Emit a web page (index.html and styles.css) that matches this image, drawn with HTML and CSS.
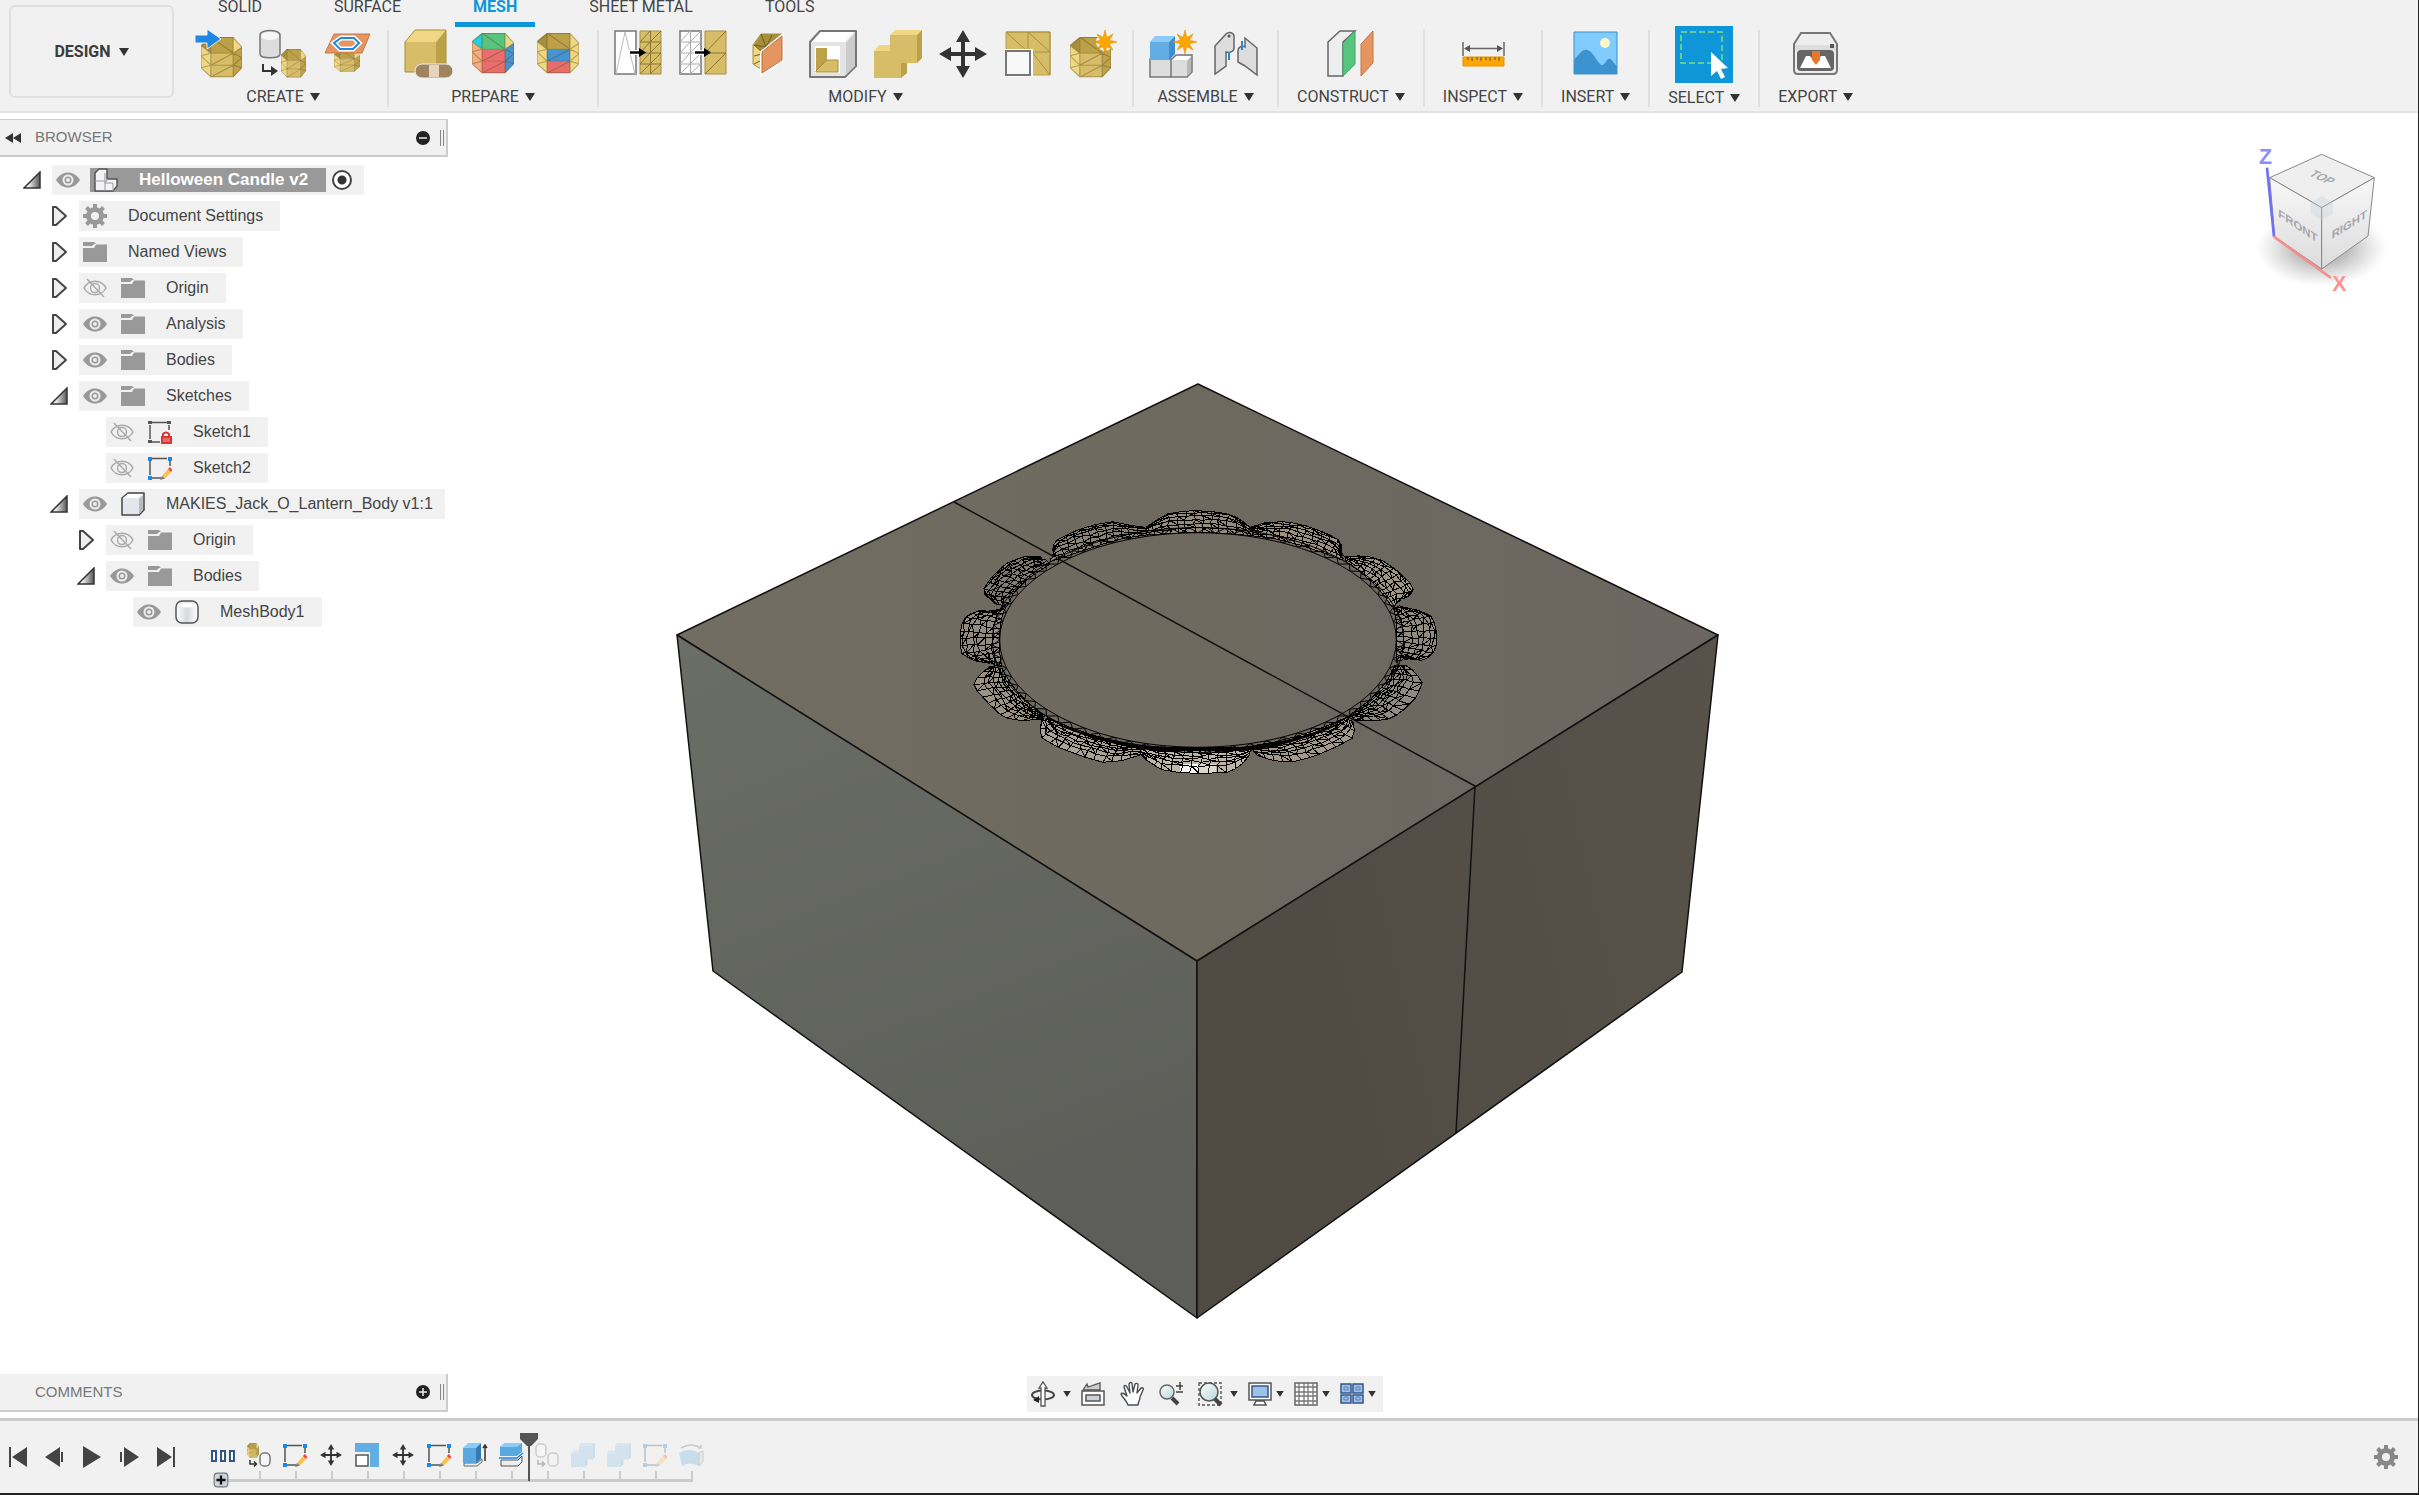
FILE: index.html
```html
<!DOCTYPE html>
<html lang="en">
<head>
<meta charset="utf-8">
<title>Helloween Candle v2</title>
<link rel="stylesheet" href="styles.css">
<script src="mesh.js" defer></script>
</head>
<body>
<svg class="defs" aria-hidden="true">
  <defs>
    <linearGradient id="gOpen" x1="0" y1="0" x2="1" y2="0"><stop offset="0.3" stop-color="#eee"/><stop offset="1" stop-color="#555"/></linearGradient>
    <linearGradient id="gSilver" x1="0" y1="0" x2="1" y2="0"><stop offset="0" stop-color="#fff"/><stop offset="0.5" stop-color="#d5dae0"/><stop offset="1" stop-color="#fff"/></linearGradient>
    <linearGradient id="gLens" x1="0" y1="0" x2="1" y2="1"><stop offset="0" stop-color="#fff"/><stop offset="1" stop-color="#b4d4d8"/></linearGradient>
    <symbol id="barrel" viewBox="0 0 42 48" preserveAspectRatio="none">
      <path fill="var(--tl,#a88f3c)" d="M10 0L0 10L10 19Z"/><path fill="var(--top,#bda149)" d="M10 0H33V19H10Z"/>
      <path fill="var(--tr,#f0d783)" d="M33 0L42 12L33 19Z"/><path fill="var(--left,#f0d783)" d="M0 10L10 19V47L0 36Z"/>
      <path fill="var(--mid,#d8bd69)" d="M10 19H33V33H10Z"/><path fill="var(--low,#d8bd69)" d="M10 33H33V47H10Z"/>
      <path fill="var(--right,#c0a34b)" d="M33 19L42 12V36L33 47Z"/>
      <path fill="none" stroke="#5a4a15" stroke-opacity=".4" stroke-width="1.2" d="M10 .6H33L42 12V36L33 46.5H10L0 36V10ZM10 0V47M33 0V47M10 19H33M10 33H33M10 0L33 19M10 33L33 19M10 47L33 33M0 10L10 19M0 22L10 33M0 22L10 19M0 36L10 33M33 19L42 12M33 33L42 24M33 19L42 24M33 33L42 36"/>
    </symbol>
    <symbol id="star" viewBox="0 0 24 24"><path fill="#ffa500" stroke="#e39400" stroke-width=".6" d="M12 0L13.800 7.600L20 4L16.400 10.200L24 12L16.400 13.800L20 20L13.800 16.400L12 24L10.200 16.400L4 20L7.600 13.800L0 12L7.600 10.200L4 4L10.200 7.600Z"/></symbol>
    <symbol id="move" viewBox="0 0 48 48"><path fill="#333" d="M24 0L31 12H26V22H36V17L48 24L36 31V26H26V36H31L24 48L17 36H22V26H12V31L0 24L12 17V22H22V12H17Z"/></symbol>
    <symbol id="eye" viewBox="0 0 24 24"><path fill="#999" d="M0 12C6 2 18 2 24 12C18 22 6 22 0 12Z"/><circle cx="12" cy="12" r="4.500" fill="#999" stroke="#eee" stroke-width="2"/><circle cx="12" cy="12" r="2" fill="#eee"/></symbol>
    <symbol id="eyeoff" viewBox="0 0 24 24"><path fill="none" stroke="#aaa" stroke-width="1.500" d="M1 12C6 3 18 3 23 12C18 21 6 21 1 12ZM4 3L21 21"/><circle cx="12" cy="12" r="4.500" fill="none" stroke="#aaa" stroke-width="1.500"/></symbol>
    <symbol id="folder" viewBox="0 0 24 24"><path fill="#999" d="M0 2H11L13 4H11L9 6H0ZM0 8H11L13 4.500H24V22H0Z"/></symbol>
    <symbol id="open" viewBox="0 0 18 18"><path fill="url(#gOpen)" stroke="#333" stroke-width="1.500" d="M1 17L17 1V17Z"/></symbol>
    <symbol id="closed" viewBox="0 0 18 22"><path fill="#eee" stroke="#444" stroke-width="2" stroke-linejoin="round" d="M3 2H6L16 11L6 20H3Z"/></symbol>
    <symbol id="sketch" viewBox="0 0 24 24"><path fill="none" stroke="#555" stroke-width="1.500" d="M4 2.500H19M2 5V19M4 22H13M22 5V10"/><path fill="#1e88e5" d="M0 1H4V5H0ZM20 1H24V5H20ZM0 20H4V24H0Z"/><path fill="#ffc04a" d="M14 20L20 13L23 16L17 22.500Z"/><path fill="#e44" d="M20 13L22 11L24.500 14L23 16Z"/><path fill="#777" d="M12 24L14 20L17 22.500Z"/></symbol>
    <symbol id="caret" viewBox="0 0 10 8"><path fill="#333" d="M0 0H10L5 8Z"/></symbol>
    <symbol id="convert" viewBox="0 0 24 24"><rect x="13" y="10" width="10" height="13" rx="4" fill="#f5f5f5" stroke="#777" stroke-width="1.500"/><path fill="none" stroke="#333" stroke-width="1.500" d="M3 17V21H9M7 18.500L9.500 21L7 23.500"/></symbol>
    <symbol id="join" viewBox="0 0 48 48"><path fill="#f0d783" d="M0 21L5 15H16V21ZM16 5L21 0H48L43 5Z"/><path fill="#d8bd69" d="M16 5H43V33H27V48H0V21H16Z"/><path fill="#bda149" d="M43 5L48 0V28L43 33H33V43L27 48V33H43Z"/></symbol>
    <symbol id="joinblue" viewBox="0 0 48 48"><path fill="#9fd0f2" d="M0 21L5 15H16V21ZM16 5L21 0H48L43 5Z"/><path fill="#8ec4ea" d="M16 5H43V33H27V48H0V21H16Z"/><path fill="#6fb0de" d="M43 5L48 0V28L43 33H33V43L27 48V33H43Z"/></symbol>
    <symbol id="gear" viewBox="0 0 24 24"><circle cx="12" cy="12" r="6.500" fill="none" stroke="currentColor" stroke-width="5"/><g stroke="currentColor" stroke-width="4"><path d="M12 0V5M12 19V24M0 12H5M19 12H24M3.500 3.500L7 7M17 17L20.500 20.500M3.500 20.500L7 17M17 7L20.500 3.500"/></g></symbol>
  </defs>
</svg>

<header class="toolbar">
  <button class="workspace">DESIGN <svg class="caret"><use href="#caret"/></svg></button>
  <div class="ribbon">
    <nav class="tabs">
      <button>SOLID</button><button>SURFACE</button><button class="active">MESH</button><button>SHEET METAL</button><button>TOOLS</button>
    </nav>
    <div class="groups">
      <section class="group">
        <div class="tools">
          <button aria-label="Insert mesh"><svg viewBox="0 0 48 48"><use href="#barrel" x="7" y="7" width="41" height="41"/><path fill="#1e88e5" stroke="#f1f1f1" d="M1 5H13V-1L27 9L13 19V13H1Z"/></svg></button>
          <button aria-label="Tessellate"><svg viewBox="0 0 48 48"><path fill="#ddd" stroke="#777" stroke-width="1.500" d="M1 5C1 -1 21 -1 21 5V24C21 29 1 29 1 24Z"/><ellipse cx="11" cy="6" rx="9" ry="4" fill="#f8f8f8"/><use href="#barrel" x="22" y="19" width="25" height="29"/><path fill="none" stroke="#333" stroke-width="2" d="M4 34V41H14"/><path fill="#333" d="M12 36L19 41L12 46Z"/></svg></button>
          <button aria-label="Mesh section sketch"><svg viewBox="0 0 48 48"><use href="#barrel" x="10" y="20" width="26" height="22"/><path fill="#e69560" stroke="#c47646" d="M10 4H46L38 23H1Z"/><path fill="none" stroke="#fff" stroke-width="5" d="M17 8H30L35 13L29 19H16L10 13Z"/><path fill="none" stroke="#1e88e5" stroke-width="2" d="M17 8H30L35 13L29 19H16L10 13Z"/></svg></button>
        </div>
        <button class="label">CREATE <svg class="caret"><use href="#caret"/></svg></button>
      </section>
      <section class="group">
        <div class="tools">
          <button aria-label="Repair"><svg viewBox="0 0 48 48"><path fill="#f0d783" d="M1 12L11 0H42L32 12Z"/><path fill="#d8bd69" d="M1 12H32V42H1Z"/><path fill="#bda149" d="M32 12L42 0V34L32 42Z"/><path fill="none" stroke="#a88f3c" d="M1 12L11 0H42V34L32 42H1Z"/><rect x="11" y="34" width="38" height="14" rx="7" fill="#a0845f" stroke="#f1f1f1"/><path fill="#e8d3bd" d="M25 35H35V47H25Z"/></svg></button>
          <button aria-label="Generate face groups"><svg viewBox="0 0 48 48" class="faces"><use href="#barrel" x="3" y="3" width="42" height="41"/></svg></button>
          <button aria-label="Combine face groups"><svg viewBox="0 0 48 48" class="faces-two"><use href="#barrel" x="3" y="3" width="42" height="41"/></svg></button>
        </div>
        <button class="label">PREPARE <svg class="caret"><use href="#caret"/></svg></button>
      </section>
      <section class="group">
        <div class="tools">
          <button aria-label="Remesh"><svg viewBox="0 0 48 48"><path fill="#fff" stroke="#777" stroke-width="1.500" d="M1 1H22V44H1Z"/><path fill="none" stroke="#bbb" d="M2 44L11 2L21 44"/><path fill="#d8bd69" stroke="#a88f3c" d="M26 1H47V44H26Z"/><path fill="none" stroke="#8d7630" d="M36.500 1V44M26 12H47M26 23H47M26 34H47M26 12L36 1M36 12L47 1M26 23L36 12M36 23L47 12M26 34L36 23M36 34L47 23M26 44L36 34M36 44L47 34"/><path stroke="#fff" stroke-width="5" d="M15 22.500H28"/><path stroke="#000" stroke-width="2.500" d="M16 22.500H27"/><path d="M25 18L32 22.500L25 27Z"/></svg></button>
          <button aria-label="Reduce"><svg viewBox="0 0 48 48"><path fill="#fff" stroke="#777" stroke-width="1.500" d="M1 1H22V44H1Z"/><path fill="none" stroke="#aaa" d="M11.500 1V44M1 12H22M1 23H22M1 34H22M1 12L11 1M11 12L22 1M1 23L11 12M11 23L22 12M1 34L11 23M11 34L22 23M1 44L11 34M11 44L22 34"/><path fill="#d8bd69" stroke="#a88f3c" d="M26 1H47V44H26Z"/><path fill="none" stroke="#8d7630" d="M26 23H47M26 23L47 1M26 44L47 23"/><path stroke="#fff" stroke-width="5" d="M15 22.500H28"/><path stroke="#000" stroke-width="2.500" d="M16 22.500H27"/><path d="M25 18L32 22.500L25 27Z"/></svg></button>
          <button aria-label="Plane cut"><svg viewBox="0 0 48 48"><path fill="#f0d783" stroke="#a88f3c" d="M9 15L17 4H38L20 22V41L9 34Z"/><path fill="#a88f3c" d="M10 15L17 4H38L18 22Z"/><path fill="none" stroke="#6f5c22" d="M17 4L22 17L28 5M10 15L18 22M10 15L22 17M10 26L18 24M10 34L18 30"/><path fill="#e69560" stroke="#fff" stroke-width="2" d="M17 22L39 4V30L17 45Z"/><path fill="none" stroke="#b96d3c" d="M18 22L38 6V30L18 43Z"/></svg></button>
          <button aria-label="Shell"><svg viewBox="0 0 48 48"><path fill="#e4e4e4" stroke="#777" stroke-width="2" stroke-linejoin="round" d="M1 12L11 1H47V36L36 47H1Z"/><path fill="#fff" d="M3 12L12 2H45L36 12Z"/><path fill="#ccc" d="M37 13L46 3V36L37 45Z"/><path fill="#fff" d="M6 16H31V43H6Z"/><path fill="#bda149" d="M7 18H18V30L7 41Z"/><path fill="#d8bd69" stroke="#a88f3c" d="M7 41L18 30H29V42H7Z"/></svg></button>
          <button aria-label="Combine"><svg viewBox="0 0 48 48"><use href="#join"/></svg></button>
          <button aria-label="Move"><svg viewBox="0 0 48 48"><use href="#move"/></svg></button>
          <button aria-label="Scale mesh"><svg viewBox="0 0 48 48"><path fill="#d8bd69" stroke="#bda149" d="M2 2H46V45H2Z"/><path fill="none" stroke="#a88f3c" d="M2 2L24 22M24 2V22M24 2L46 22H26M28 22L46 45M2 2H46V45"/><path fill="#fff" d="M1 19H29V47H1Z"/><path fill="#f8f8f8" stroke="#777" stroke-width="2" d="M2 21H26V45H2Z"/></svg></button>
          <button aria-label="Convert mesh"><svg viewBox="0 0 48 48"><use href="#barrel" x="1" y="7" width="41" height="41"/><circle cx="36" cy="12" r="9" fill="#f1f1f1"/><use href="#star" x="24" y="0" width="24" height="24"/></svg></button>
        </div>
        <button class="label">MODIFY <svg class="caret"><use href="#caret"/></svg></button>
      </section>
      <section class="group">
        <div class="tools">
          <button aria-label="New component"><svg viewBox="0 0 48 48"><path fill="#ddd" stroke="#777" stroke-width="1.500" d="M1 29H22V47H1ZM22 30L27 25H43V42L38 47H22Z"/><path fill="#fff" d="M23 30L28 26H42L38 30Z"/><path fill="#b9b9b9" d="M38 31L42 27V42L38 46Z"/><path fill="#62aee4" d="M1 12H20V30H1Z"/><path fill="#8ccbfa" d="M1 12L6 6H26L20 12Z"/><path fill="#3c8fcc" d="M20 12L26 6V24L20 30Z"/><circle cx="36" cy="13" r="8" fill="#f1f1f1"/><use href="#star" x="24" y="0" width="24" height="24"/></svg></button>
          <button aria-label="Joint"><svg viewBox="0 0 48 48"><path fill="#ddd" stroke="#666" stroke-width="1.500" d="M1 16L12 4C15 1 20 3 20 6V18C20 22 15 23 12 22V36L1 44ZM24 21C24 17 28 15 31 17V8L43 18V45L31 36L24 32Z"/><circle cx="15" cy="6" r="1.500" fill="#555"/><path stroke="#1e88e5" stroke-width="2" d="M15 22V30M28 11V20"/></svg></button>
        </div>
        <button class="label">ASSEMBLE <svg class="caret"><use href="#caret"/></svg></button>
      </section>
      <section class="group single">
        <div class="tools">
          <button aria-label="Offset plane"><svg viewBox="0 0 48 48"><path fill="#eee" stroke="#666" stroke-width="1.500" d="M1 12L13 1H28L16 12V46H1Z"/><path fill="#57c57d" stroke="#3da664" d="M16 13L28 1V34L16 46Z"/><path fill="#e69560" stroke="#c47646" d="M34 14L46 1V33L34 46Z"/></svg></button>
        </div>
        <button class="label">CONSTRUCT <svg class="caret"><use href="#caret"/></svg></button>
      </section>
      <section class="group single">
        <div class="tools">
          <button aria-label="Measure"><svg viewBox="0 0 48 48"><path stroke="#666" stroke-width="1.500" d="M4 12V26M45 12V26M8 18.500H41"/><path fill="#555" d="M5 18.500L11 15V22ZM44 18.500L38 15V22Z"/><path fill="#ffa500" stroke="#e39400" d="M4 27H45V36H4Z"/><path stroke="#555" d="M9 27V30M13 27V31M18 27V30M22 27V31M27 27V30M31 27V31M36 27V30M40 27V31"/></svg></button>
        </div>
        <button class="label">INSPECT <svg class="caret"><use href="#caret"/></svg></button>
      </section>
      <section class="group single">
        <div class="tools">
          <button aria-label="Insert image"><svg viewBox="0 0 48 48"><path fill="#82cbff" stroke="#3c8fcc" d="M2 2H45V44H2Z"/><circle cx="33" cy="13" r="5" fill="#fdf6c8"/><path fill="#3c93cf" d="M2 30C8 24 10 19 15 20C22 21 26 36 31 35C34 33 35 28 38 29C41 30 42 34 45 36V44H2Z"/></svg></button>
        </div>
        <button class="label">INSERT <svg class="caret"><use href="#caret"/></svg></button>
      </section>
      <section class="group single">
        <div class="tools">
          <button class="tile" aria-label="Select"><svg viewBox="0 0 58 57"><path fill="none" stroke="#7ce07c" stroke-width="1.500" stroke-dasharray="6 3" d="M6 6H47V37H6Z"/><path fill="#fff" d="M36 26V50L42 45L46 53L50 51L46 43L53 42Z"/></svg></button>
        </div>
        <button class="label">SELECT <svg class="caret"><use href="#caret"/></svg></button>
      </section>
      <section class="group single last">
        <div class="tools">
          <button aria-label="3D print"><svg viewBox="0 0 48 48"><path fill="#eee" stroke="#777" stroke-width="2" d="M2 14L9 3H38L45 14V40Q45 44 41 44H6Q2 44 2 40Z"/><path fill="#ddd" d="M3 15H44V20H3Z"/><rect x="5" y="20" width="37" height="21" rx="4" fill="#666"/><path fill="#fff" d="M8 38L14 26H18L24 34L29 26H33L39 38Z"/><path fill="#e8762c" d="M20 21H28V30L24 35L20 30Z"/><path fill="#555" d="M38 14H42V18H38Z"/></svg></button>
        </div>
        <button class="label">EXPORT <svg class="caret"><use href="#caret"/></svg></button>
      </section>
    </div>
  </div>
</header>

<main class="stage">
  <svg class="model" viewBox="0 113 2418 1305" role="img" aria-label="Candle body model">
    <defs>
      <linearGradient id="fTop" x1="0" y1="0" x2="1" y2="0"><stop offset="0" stop-color="#726d62"/><stop offset="0.550" stop-color="#6e695f"/><stop offset="1" stop-color="#6b6760"/></linearGradient>
      <linearGradient id="fLeft" x1="0" y1="0" x2="0.300" y2="1"><stop offset="0" stop-color="#6b6d67"/><stop offset="1" stop-color="#5d5e59"/></linearGradient>
      <linearGradient id="fRight" x1="0" y1="0.300" x2="1" y2="0"><stop offset="0" stop-color="#4f4b43"/><stop offset="1" stop-color="#57534a"/></linearGradient>
    </defs>
    <g stroke="#111" stroke-width="1.500" stroke-linejoin="round">
      <path fill="url(#fTop)" d="M1198 384L1718 635L1197 961L677 635Z"/>
      <path fill="url(#fLeft)" d="M677 635L1197 961L1197 1318L713 971Z"/>
      <path fill="url(#fRight)" d="M1718 635L1197 961L1197 1318L1682 972Z"/>
      <path fill="none" d="M954 502L1475 786L1456 1133"/>
    </g>
    <g id="scallops"></g>
  </svg>

  <aside class="browser">
    <div class="panel-head">
      <button class="collapse" aria-label="Collapse"><svg viewBox="0 0 16 10"><path fill="#333" d="M8 0V10L0 5ZM16 0V10L8 5Z"/></svg></button>
      <h2>BROWSER</h2>
      <button class="round" aria-label="Hide"><svg viewBox="0 0 14 14"><circle cx="7" cy="7" r="7" fill="#222"/><path stroke="#eee" stroke-width="1.500" d="M3 7H11"/></svg></button>
      <span class="grip"></span>
    </div>
    <ul class="tree">
      <li><div class="row"><button class="twist" aria-label="Collapse"><svg class="o"><use href="#open"/></svg></button>
        <div class="chip root"><svg><use href="#eye"/></svg><span class="picked"><svg viewBox="0 0 24 24"><path fill="#f4f4f8" stroke="#555" stroke-width="1.500" stroke-linejoin="round" d="M1 5L5 1H13V11H23V18L19 23H1Z"/><path fill="none" stroke="#999" d="M1 13H11M11 5V23M11 15L14 11M11 15H19V23"/></svg><b>Helloween Candle v2</b></span><input type="radio" checked aria-label="Activate Helloween Candle v2"></div></div>
        <ul>
          <li><div class="row"><button class="twist" aria-label="Expand"><svg><use href="#closed"/></svg></button><div class="chip"><svg class="grey"><use href="#gear"/></svg><span>Document Settings</span></div></div></li>
          <li><div class="row"><button class="twist" aria-label="Expand"><svg><use href="#closed"/></svg></button><div class="chip"><svg><use href="#folder"/></svg><span>Named Views</span></div></div></li>
          <li><div class="row"><button class="twist" aria-label="Expand"><svg><use href="#closed"/></svg></button><div class="chip"><svg><use href="#eyeoff"/></svg><svg><use href="#folder"/></svg><span>Origin</span></div></div></li>
          <li><div class="row"><button class="twist" aria-label="Expand"><svg><use href="#closed"/></svg></button><div class="chip"><svg><use href="#eye"/></svg><svg><use href="#folder"/></svg><span>Analysis</span></div></div></li>
          <li><div class="row"><button class="twist" aria-label="Expand"><svg><use href="#closed"/></svg></button><div class="chip"><svg><use href="#eye"/></svg><svg><use href="#folder"/></svg><span>Bodies</span></div></div></li>
          <li><div class="row"><button class="twist" aria-label="Collapse"><svg class="o"><use href="#open"/></svg></button><div class="chip"><svg><use href="#eye"/></svg><svg><use href="#folder"/></svg><span>Sketches</span></div></div>
            <ul>
              <li><div class="row"><span class="twist"></span><div class="chip"><svg><use href="#eyeoff"/></svg><svg viewBox="0 0 24 24"><path fill="none" stroke="#555" stroke-width="1.500" d="M4 2.500H19M2 5V19M4 22H12M21 5V10"/><path fill="#555" d="M0 1H4V4H0ZM19 1H23V4H19ZM0 20H4V23H0Z"/><path fill="none" stroke="#d33" stroke-width="2" d="M15 17V14Q18 11 21 14V17"/><path fill="#d33" d="M13 16H24V24H13Z"/><path stroke="#f5a0a0" d="M15 19H22M15 21H22"/></svg><span>Sketch1</span></div></div></li>
              <li><div class="row"><span class="twist"></span><div class="chip"><svg><use href="#eyeoff"/></svg><svg><use href="#sketch"/></svg><span>Sketch2</span></div></div></li>
            </ul></li>
          <li><div class="row"><button class="twist" aria-label="Collapse"><svg class="o"><use href="#open"/></svg></button><div class="chip long"><svg><use href="#eye"/></svg><svg viewBox="0 0 24 24"><path fill="#e4e6ee" stroke="#444" stroke-width="1.500" stroke-linejoin="round" d="M1 6L7 1H23V18L18 23H1Z"/><path fill="#fff" d="M2 6L7 2H22L17 6Z"/><path fill="#bbb" d="M18 7L22 3V18L18 22Z"/></svg><span>MAKIES_Jack_O_Lantern_Body v1:1</span></div></div>
            <ul>
              <li><div class="row"><button class="twist" aria-label="Expand"><svg><use href="#closed"/></svg></button><div class="chip"><svg><use href="#eyeoff"/></svg><svg><use href="#folder"/></svg><span>Origin</span></div></div></li>
              <li><div class="row"><button class="twist" aria-label="Collapse"><svg class="o"><use href="#open"/></svg></button><div class="chip"><svg><use href="#eye"/></svg><svg><use href="#folder"/></svg><span>Bodies</span></div></div>
                <ul>
                  <li><div class="row"><span class="twist"></span><div class="chip"><svg><use href="#eye"/></svg><svg viewBox="0 0 24 24"><rect x="1" y="1" width="22" height="22" rx="6" fill="url(#gSilver)" stroke="#555" stroke-width="1.500"/><path fill="#fff" d="M3 5Q12 0 21 5Q12 10 3 5Z"/></svg><span>MeshBody1</span></div></div></li>
                </ul></li>
            </ul></li>
        </ul></li>
    </ul>
  </aside>

  <svg class="cube" viewBox="0 0 597 570" role="img" aria-label="View cube">
    <defs><radialGradient id="shade"><stop offset="0.400" stop-color="#888" stop-opacity=".55"/><stop offset="1" stop-color="#aaa" stop-opacity="0"/></radialGradient>
      <linearGradient id="cf" x1="0" y1="0" x2="0" y2="1"><stop offset="0" stop-color="#f8f8f8"/><stop offset="1" stop-color="#dcdcdc"/></linearGradient></defs>
    <ellipse cx="308" cy="385" rx="195" ry="115" fill="url(#shade)"/>
    <g stroke="#888" stroke-width="3" stroke-linejoin="round"><path fill="#efefef" d="M308 103L466 173L308 263L152 173Z"/><path fill="url(#cf)" d="M152 173L308 263V447L167 350Z"/><path fill="url(#cf)" d="M466 173L308 263V447L447 348Z"/></g>
    <path fill="#c8d0da" opacity=".35" d="M308 228L342 248V282L308 300L275 282V248Z"/>
    <path stroke="#7070f0" stroke-width="8" d="M144 143L165 350"/><path stroke="#f58d8d" stroke-width="8" d="M165 350L336 474"/>
    <text class="axis z" x="120" y="131">Z</text><text class="axis x" x="340" y="514">X</text>
    <text class="face" transform="translate(267 166) rotate(24) skewX(-30)">TOP</text>
    <text class="face" transform="translate(178 290) skewY(34)">FRONT</text>
    <text class="face" transform="translate(338 358) skewY(-32)">RIGHT</text>
  </svg>

  <aside class="comments panel-head">
    <h2>COMMENTS</h2>
    <button class="round" aria-label="Show comments"><svg viewBox="0 0 14 14"><circle cx="7" cy="7" r="7" fill="#222"/><path stroke="#eee" stroke-width="1.500" d="M3 7H11M7 3V11"/></svg></button>
    <span class="grip"></span>
  </aside>

  <nav class="navbar">
    <button class="wide" aria-label="Orbit"><svg viewBox="0 0 24 24"><ellipse cx="12" cy="13" rx="11" ry="4.500" fill="none" stroke="#444" stroke-width="2"/><path fill="#fff" stroke="#555" stroke-width="1.300" d="M10 24V6H8L12 0L16 6H14V24Z"/><path fill="#222" d="M2 18L8 14V21Z"/></svg><svg class="caret"><use href="#caret"/></svg></button>
    <button class="plain" aria-label="Look at"><svg viewBox="0 0 24 24"><path fill="#ccc" stroke="#555" stroke-width="1.300" d="M2 8L6 2L7 5L19 1V8Z"/><path fill="#fff" stroke="#555" stroke-width="1.500" d="M1 9H23V23H1Z"/><path fill="#ccd2d6" stroke="#555" stroke-width="1.500" d="M5 13H19V19H5Z"/></svg></button>
    <button class="plain" aria-label="Pan"><svg viewBox="0 0 24 24"><path fill="#fff" stroke="#4a4f55" stroke-width="1.400" stroke-linejoin="round" d="M8 23C7 19 2 15 1 12C2 10 5 12 7 14L4 5C4 3 6 3 7 5L10 11L9 2C10 0 12 0 12 2L13 10L15 2C16 1 18 1 18 3L17 11L21 6C23 5 24 7 23 8L20 15C20 19 18 20 18 23Z"/></svg></button>
    <button class="plain" aria-label="Zoom"><svg viewBox="0 0 24 24"><circle cx="8" cy="10" r="7" fill="url(#gLens)" stroke="#666" stroke-width="1.500"/><path stroke="#444" stroke-width="4" d="M13 16L19 22"/><path stroke="#444" stroke-width="1.500" d="M21 0V8M17 4H24M17 10H24"/></svg></button>
    <button class="wide" aria-label="Fit"><svg viewBox="0 0 24 24"><path fill="none" stroke="#555" stroke-dasharray="3 2" stroke-width="1.400" d="M1 1H23V23H1Z"/><circle cx="11" cy="10" r="9" fill="url(#gLens)" stroke="#555" stroke-width="1.500"/><path stroke="#444" stroke-width="4" d="M17 17L23 23"/></svg><svg class="caret"><use href="#caret"/></svg></button>
    <button aria-label="Display settings"><svg viewBox="0 0 24 24"><path fill="#fff" stroke="#555" stroke-width="1.500" d="M1 1H23V18H1ZM8 19H16L18 23H6Z"/><path fill="#9cc0e8" stroke="#34558b" stroke-width="1.500" d="M4 4H20V15H4Z"/></svg><svg class="caret"><use href="#caret"/></svg></button>
    <button aria-label="Grid and snaps"><svg viewBox="0 0 24 24"><path fill="#fff" stroke="#666" stroke-width="1.500" d="M1 1H23V23H1Z"/><path stroke="#777" stroke-width="1.300" d="M5 1V23M10 1V23M14 1V23M19 1V23M1 5H23M1 10H23M1 14H23M1 19H23"/></svg><svg class="caret"><use href="#caret"/></svg></button>
    <button aria-label="Viewports"><svg viewBox="0 0 24 24"><path fill="#9cc0e8" stroke="#34558b" stroke-width="1.500" d="M1 2H11V11H1ZM13 2H23V11H13ZM1 13H11V21H1ZM13 13H23V21H13Z"/><path fill="none" stroke="#5d83b8" d="M4 5H8V8H4ZM16 5H20V8H16ZM4 15H8V18H4ZM16 15H20V18H16Z"/></svg><svg class="caret"><use href="#caret"/></svg></button>
  </nav>
</main>

<footer class="timeline">
  <div class="playback">
    <button aria-label="First"><svg viewBox="0 0 24 24"><path fill="#444" d="M3 2H5V22H3ZM21 2V22L6 12Z"/></svg></button>
    <button aria-label="Previous"><svg viewBox="0 0 24 24"><path fill="#444" d="M17 2V22L2 12ZM18 7H20V17H18Z"/></svg></button>
    <button aria-label="Play"><svg viewBox="0 0 24 24"><path fill="#444" d="M3 1L21 12L3 23Z"/></svg></button>
    <button aria-label="Next"><svg viewBox="0 0 24 24"><path fill="#444" d="M7 2V22L22 12ZM3 7H5V17H3Z"/></svg></button>
    <button aria-label="Last"><svg viewBox="0 0 24 24"><path fill="#444" d="M3 2V22L18 12ZM19 2H21V22H19Z"/></svg></button>
  </div>
  <ol class="features">
    <li><svg viewBox="0 0 24 24"><path fill="#fff" stroke="#34558b" stroke-width="2" d="M1 8H5V18H1ZM10 8H14V18H10ZM19 8H23V18H19Z"/></svg><button class="plus" aria-label="Expand group"><svg viewBox="0 0 14 14"><rect x="1" y="1" width="12" height="12" rx="3" fill="#ccd3df" stroke="#777"/><path stroke="#111" stroke-width="2" d="M3 7H11M7 3V11"/></svg></button></li>
    <li><svg viewBox="0 0 24 24"><use href="#barrel" x="0" y="0" width="12" height="15"/><use href="#convert"/></svg><i></i></li>
    <li><svg><use href="#sketch"/></svg><i></i></li>
    <li><svg viewBox="0 0 24 24"><use href="#move" x="1" y="1" width="22" height="22"/></svg><i></i></li>
    <li><svg viewBox="0 0 24 24"><path fill="#62aee4" d="M0 0H24V24H15V9H0Z"/><path fill="#fff" stroke="#555" stroke-width="1.500" d="M1 12H13V23H1Z"/></svg><i></i></li>
    <li><svg viewBox="0 0 24 24"><use href="#move" x="1" y="1" width="22" height="22"/></svg><i></i></li>
    <li><svg><use href="#sketch"/></svg><i></i></li>
    <li><svg viewBox="0 0 24 24"><path fill="#eee" stroke="#666" d="M1 20H14L19 16V19L14 23H1Z"/><path fill="#5ba8e0" d="M0 5H13V20H0Z"/><path fill="#8ccbfa" d="M0 5L5 0H18L13 5Z"/><path fill="#3579b0" d="M13 5L18 0V16L13 20Z"/><path fill="none" stroke="#333" stroke-width="1.500" d="M22 18V2M20 5L22 2L24 5"/></svg><i></i></li>
    <li><svg viewBox="0 0 24 24"><path fill="#5ba8e0" d="M1 4L6 0H23V9L18 13H1Z"/><path fill="#8ccbfa" d="M1 4L6 0H23L18 4Z"/><path fill="#eee" stroke="#555" d="M2 17H19L23 13V19L19 23H2Z"/><path fill="none" stroke="#1e88e5" stroke-width="1.500" d="M0 15H18L24 10"/></svg><i></i></li>
    <li class="off"><svg viewBox="0 0 24 24"><rect x="1" y="1" width="10" height="13" rx="4" fill="#fff" stroke="#777" stroke-width="1.500"/><use href="#convert"/></svg><i></i></li>
    <li class="off"><svg><use href="#joinblue"/></svg><i></i></li>
    <li class="off"><svg><use href="#joinblue"/></svg><i></i></li>
    <li class="off"><svg><use href="#sketch"/></svg><i></i></li>
    <li class="off"><svg viewBox="0 0 24 24"><path fill="#6fb0de" d="M0 10Q10 4 20 10V23Q11 18 3 23Z"/><path fill="#ddd" stroke="#777" d="M20 10L24 8V18L20 23Z"/><path fill="none" stroke="#777" stroke-width="1.500" d="M2 5Q12 -1 22 5M19 5H22V2"/></svg><i></i></li>
    <li class="marker"><svg viewBox="0 0 18 48"><path fill="#555" d="M0 0H18V6L11 13H10V48H8V13H7L0 6Z"/></svg></li>
  </ol>
  <button class="settings" aria-label="Settings"><svg><use href="#gear"/></svg></button>
</footer>
</body>
</html>
```

FILE: styles.css
```css
* { box-sizing: border-box; }
body {
  margin: 0; min-height: 100vh; display: flex; flex-direction: column;
  background: #fff; color: #444; overflow: hidden;
  border-right: 1px solid #222; border-bottom: 2px solid #222;
  font: 16px/20px "Liberation Sans", Arial, sans-serif;
}
.defs { position: absolute; width: 0; height: 0; }
button { border: 0; padding: 0; margin: 0; background: none; font: inherit; color: inherit; display: flex; align-items: center; }
ul, ol { list-style: none; margin: 0; padding: 0; }
svg { display: block; overflow: visible; flex: none; }
.caret { width: 10px; height: 8px; }

.toolbar {
  display: flex; align-items: flex-start; height: 113px; flex: none;
  background: #f1f1f1; border-bottom: 2px solid #e2e2e2;
  font-family: Roboto, sans-serif; color: #444;
}
.workspace {
  width: 165px; height: 93px; margin: 5px 5px 0 9px; justify-content: center; gap: 8px;
  border: 2px solid #e0e0e0; border-radius: 6px; font-weight: 700; color: #3c3c3c;
}
.tabs { display: flex; gap: 36px; padding-left: 21px; height: 27px; }
.tabs button { padding: 0 18px 8px; line-height: 14px; border-bottom: 5px solid transparent; }
.tabs .active { color: #0e96d8; font-weight: 700; border-color: #0e96d8; }
.groups { display: flex; height: 84px; }
.group {
  display: flex; flex-direction: column; align-items: center; padding: 0 15px;
  border-right: 2px solid #e0e0e0; height: 77px; margin-top: 3px;
}
.group.single { padding: 0 18px; }
.group.last { border: 0; }
.tools { display: flex; gap: 17px; height: 49px; align-items: center; }
.tools svg { width: 48px; height: 48px; }
.tools .tile { background: #0e96d8; margin: -4px 0; }
.tools .tile svg { width: 58px; height: 57px; }
.label { gap: 6px; margin-top: 9px; line-height: 20px; }
.faces { --tl: #1fd0e4; --top: #57c57d; --tr: #f0d783; --left: #f4ae80; --mid: #ea6d6d; --low: #ea6d6d; --right: #4494d3; }
.faces-two { --mid: #4494d3; --low: #ea6d6d; --right: #f0d783; }

.stage { flex: 1; min-height: 0; display: grid; grid-template: minmax(0, 1fr) / minmax(0, 1fr); }
.stage > * { grid-area: 1 / 1; }
.model { width: 100%; height: 100%; }
.browser { justify-self: start; align-self: start; padding-top: 6px; }
.panel-head {
  display: flex; align-items: center; width: 448px; height: 38px; padding: 0 2px 0 5px;
  background: #f1f1f1; border: 1px solid #ccc; border-width: 1px 2px 2px 0;
}
.panel-head h2 { flex: 1; margin: 0; padding-bottom: 1px; font-size: 15px; font-weight: 400; color: #777; }
.collapse { width: 30px; }
.collapse svg { width: 16px; height: 10px; }
.round svg { width: 14px; height: 14px; }
.grip { width: 4px; height: 16px; margin-left: 10px; border: 1px solid #888; border-width: 0 1px; }
.comments { justify-self: start; align-self: end; margin-bottom: 6px; padding-left: 35px; border-top: 0; }

.tree { padding: 8px 0 0 23px; }
.tree ul { margin-left: 27px; }
.row { display: flex; height: 30px; margin-bottom: 6px; }
.twist { width: 29px; }
.twist svg { width: 18px; height: 22px; }
.twist .o { height: 18px; }
.chip { display: flex; align-items: center; gap: 14px; padding: 0 17px 0 4px; background: #f1f1f1; }
.chip.long { padding-right: 12px; }
.chip svg { width: 24px; height: 24px; }
.chip > span:last-child { margin-left: 7px; }
.chip .grey { color: #999; }
.chip.root { gap: 10px; padding-right: 12px; }
.picked { display: flex; align-items: center; gap: 21px; height: 24px; padding: 0 18px 0 4px; background: #999; color: #fff; font-size: 17px; }
.root input {
  appearance: none; width: 20px; height: 20px; margin: 0 0 0 -4px;
  border: 2px solid #444; border-radius: 50%; background: radial-gradient(circle, #333 0 4px, #fff 5px);
}

.cube { justify-self: end; align-self: start; width: 199px; height: 190px; margin-top: 7px; }
.cube text { font-family: "Liberation Sans", Arial, sans-serif; }
.axis { font-size: 64px; font-weight: 700; }
.axis.z { fill: #8c8cfa; }
.axis.x { fill: #ff9393; }
.face { font-size: 34px; font-weight: 700; fill: #a4a8ad; }

.navbar {
  justify-self: center; align-self: end; display: flex; align-items: center; gap: 9px;
  height: 36px; margin: 0 8px 6px 0; padding: 0 6px 0 4px; background: #f1f1f1;
}
.navbar button { gap: 3px; }
.navbar .wide { gap: 7px; }
.navbar .plain { margin-right: 6px; }
.navbar button > svg:first-child { width: 24px; height: 24px; }
.navbar .caret { height: 6px; }

.timeline { display: flex; align-items: flex-start; height: 75px; flex: none; background: #f1f1f1; border-top: 3px solid #ccc; }
.timeline svg { width: 24px; height: 24px; }
.playback { display: flex; gap: 13px; padding: 24px 0 0 6px; width: 205px; }
.features { display: flex; position: relative; flex: 1; }
.features li { width: 36px; padding: 22px 6px 0; }
.features i { display: block; width: 37px; height: 11px; margin: 4px 0 0 -23px; border: 2px solid #ccc; border-width: 0 2px 3px 0; }
.features .off > svg { opacity: .3; }
.features .plus { position: relative; z-index: 1; margin: 5px 0 0 2px; }
.features .plus svg { width: 16px; height: 16px; }
.features .marker { position: absolute; left: 315px; top: 12px; width: 18px; padding: 0; }
.marker svg { width: 18px; height: 48px; }
.settings { margin: 24px 20px 0 0; color: #888; }
```

FILE: mesh.js
```js
// Each scallop: outer rim and inner rim, in thirds of a model unit.
const scallops = [
  ["618,112 650,90 680,72 730,64 772,62 830,66 880,76 905,92 930,112", "618,135 690,130 775,127 850,130 935,137", "#968c7b"],
  ["930,112 980,97 1040,95 1100,108 1160,130 1205,155 1205,190", "935,137 1000,145 1080,165 1150,188 1205,210", "#9c927f"],
  ["1215,198 1280,198 1330,212 1380,248 1420,290 1418,312 1390,325", "1215,212 1260,245 1300,280 1335,320 1355,350", "#a09684"],
  ["1385,350 1440,362 1475,380 1488,410 1488,480 1470,500 1440,513 1400,495", "1360,350 1370,400 1370,450 1368,520", "#918b7e"],
  ["1395,525 1425,545 1447,578 1430,620 1385,665 1355,685 1310,692 1245,690", "1365,525 1340,575 1290,630 1230,675", "#8f8b82"],
  ["1240,695 1245,740 1190,770 1120,800 1050,817 990,810 950,795", "1215,684 1150,712 1080,736 1000,757 935,768", "#a39a8c"],
  ["925,800 900,830 860,848 775,850 720,848 660,838 620,810 600,790", "940,770 880,773 775,773 690,773 605,768", "#bdb5a7"],
  ["600,795 545,812 490,817 430,800 350,770 300,740 300,710 305,690", "600,768 540,757 460,736 390,712 325,684", "#a9a295"],
  ["300,688 240,692 190,682 150,645 100,590 105,570 125,548 150,530", "315,678 260,635 215,585 185,535", "#9c9383"],
  ["150,520 100,512 65,490 60,460 62,410 80,375 120,362 160,370", "185,530 178,480 180,420 185,380 200,345", "#928c7f"],
  ["165,340 135,315 128,300 160,255 200,220 255,198 300,200", "200,350 220,310 265,265 330,222", "#827d72"],
  ["340,190 340,155 400,125 460,105 520,95 565,105 615,112", "330,215 400,192 480,165 550,145 618,135", "#8a8477"]
];

const parse = s => s.split(" ").map(p => p.split(",").map(Number));

function resample(pts, n) {
  const len = [0];
  for (let i = 1; i < pts.length; i++)
    len.push(len[i - 1] + Math.hypot(pts[i][0] - pts[i - 1][0], pts[i][1] - pts[i - 1][1]));
  const out = [];
  for (let k = 0, i = 1; k <= n; k++) {
    const d = len[len.length - 1] * k / n;
    while (i < pts.length - 1 && len[i] < d) i++;
    const t = (d - len[i - 1]) / (len[i] - len[i - 1]);
    out.push([0, 1].map(a => pts[i - 1][a] + (pts[i][a] - pts[i - 1][a]) * t));
  }
  return out;
}

let seed = 7;
const rnd = () => (seed = seed * 16807 % 2147483647) / 2147483647 - 0.5;
const at = p => (940 + p[0] / 3).toFixed(1) + " " + (490 + p[1] / 3).toFixed(1);

let svg = "";
scallops.forEach(([o, i, fill], index) => {
  const n = 13, front = index > 3 && index < 9;
  const rows = index < 3 || index > 10 ? 6 : 7;
  const a = resample(parse(o), n), b = resample(parse(i), n);
  const grid = [];
  for (let r = 0; r <= rows; r++) {
    const t = Math.pow(r / rows, front ? 0.65 : 1.4);
    grid.push(a.map((p, k) => {
      const j = r && r < rows ? 11 : 0;
      return [p[0] + (b[k][0] - p[0]) * t + rnd() * j, p[1] + (b[k][1] - p[1]) * t + rnd() * j * 0.6];
    }));
  }
  svg += `<path fill="${fill}" d="M${a.concat(b.slice().reverse()).map(at).join("L")}Z"/>`;
  if (index === 6) svg += '<path fill="#f7f5ef" d="M1180 764H1198V773H1180Z"/><path fill="#dcd7ca" d="M1199 764H1216V773H1199Z"/>';
  let d = "";
  grid.forEach(row => { d += "M" + row.map(at).join("L"); });
  for (let k = 0; k <= n; k++) d += "M" + grid.map(row => at(row[k])).join("L");
  for (let r = 0; r < rows; r++)
    for (let k = 0; k < n; k++)
      if ((r + k) % 3 === 0) d += "M" + at(grid[r][k]) + "L" + at(grid[r + 1][k + 1]);
  svg += `<path fill="none" stroke="#000" stroke-width="1" shape-rendering="crispEdges" d="${d}"/>`;
});

// Band between the scallops and the flat centre: two rims joined by a zigzag.
const rim = (grow, phase) => Array.from({ length: 72 }, (_, k) => {
  const q = (k + phase) * Math.PI / 36;
  return [774 + (595 + grow) * Math.cos(q), 450 + (322 + grow * 0.7) * Math.sin(q)];
});
const low = rim(0, 0), high = rim(22, 0.5);
svg += `<path fill="none" stroke="#000" stroke-width="1" d="M${low.map(at).join("L")}ZM${high.map(at).join("L")}ZM${low.map((p, k) => at(p) + "L" + at(high[k])).join("L")}"/>`;
svg += '<path fill="#000" d="M1050 722Q1110 743 1163 747H1240Q1290 743 1345 722Q1290 748 1240 751H1163Q1110 748 1050 722Z"/>';
document.getElementById("scallops").innerHTML = svg;
```
